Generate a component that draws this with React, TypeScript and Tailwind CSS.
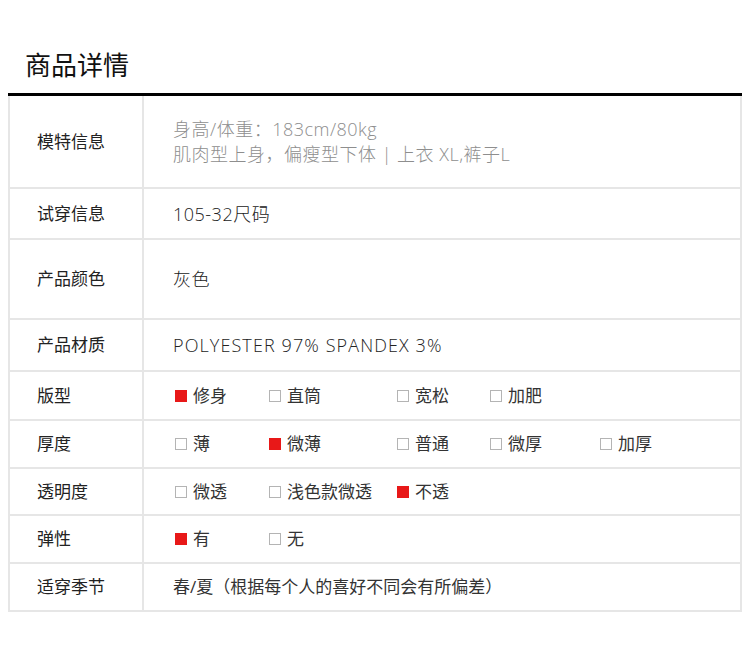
import React from "react";

const font = { fontFamily: '"Open Sans", "Noto Sans CJK SC", sans-serif' };

type Opt = { label: string; checked?: boolean };

const widths = ["w-[94px]", "w-[128px]", "w-[93px]", "w-[110px]", "w-[110px]"];

function Box({ checked }: { checked?: boolean }) {
  return checked ? (
    <span className="inline-block w-[12px] h-[12px] bg-[#e81818] shrink-0" />
  ) : (
    <span className="inline-block w-[12px] h-[12px] border border-[#b4b4b4] bg-white shrink-0" />
  );
}

function Options({ opts }: { opts: Opt[] }) {
  return (
    <div className="flex items-center pl-[31px]">
      {opts.map((o, i) => (
        <div key={o.label} className={`${widths[i]} flex items-center gap-[6px] shrink-0`}>
          <Box checked={o.checked} />
          <span className="text-[17px] text-[#333] leading-[20px]">{o.label}</span>
        </div>
      ))}
    </div>
  );
}

function Row({ label, h, children }: { label: string; h: string; children: React.ReactNode }) {
  return (
    <div className={`flex ${h} border-x-2 border-b-2 border-[#e6e6e6]`}>
      <div className="w-[134px] shrink-0 border-r-2 border-[#e6e6e6] flex items-center pl-[27px] text-[17px] text-[#222]">
        {label}
      </div>
      <div className="flex-1 flex items-center">{children}</div>
    </div>
  );
}

function Val({ children, wide }: { children: React.ReactNode; wide?: boolean }) {
  return (
    <div
      className={`pl-[29px] text-[18px] text-[#222] leading-[24px] font-light ${
        wide ? "tracking-[1.1px]" : "tracking-[0.5px]"
      }`}
    >
      {children}
    </div>
  );
}

export default function App() {
  return (
    <div className="w-[750px] h-[655px] bg-white pt-[50px]" style={font}>
      <div className="ml-[8px] w-[734px]">
        <h1 className="pl-[17px] text-[26px] leading-[30px] text-[#111] mb-[13px] font-normal">商品详情</h1>
        <div className="h-[3px] bg-black" />
        <Row label="模特信息" h="h-[93px]">
          <div className="pl-[29px] text-[18px] text-[#8e8e8e] leading-[25px] font-light tracking-[0.5px]">
            <div>身高/体重：183cm/80kg</div>
            <div>肌肉型上身，偏瘦型下体 | 上衣 XL,裤子L</div>
          </div>
        </Row>
        <Row label="试穿信息" h="h-[51px]">
          <Val>105-32尺码</Val>
        </Row>
        <Row label="产品颜色" h="h-[80px]">
          <Val>灰色</Val>
        </Row>
        <Row label="产品材质" h="h-[52px]">
          <Val wide>POLYESTER 97% SPANDEX 3%</Val>
        </Row>
        <Row label="版型" h="h-[49px]">
          <Options
            opts={[
              { label: "修身", checked: true },
              { label: "直筒" },
              { label: "宽松" },
              { label: "加肥" },
            ]}
          />
        </Row>
        <Row label="厚度" h="h-[48px]">
          <Options
            opts={[
              { label: "薄" },
              { label: "微薄", checked: true },
              { label: "普通" },
              { label: "微厚" },
              { label: "加厚" },
            ]}
          />
        </Row>
        <Row label="透明度" h="h-[47px]">
          <Options
            opts={[
              { label: "微透" },
              { label: "浅色款微透" },
              { label: "不透", checked: true },
            ]}
          />
        </Row>
        <Row label="弹性" h="h-[48px]">
          <Options opts={[{ label: "有", checked: true }, { label: "无" }]} />
        </Row>
        <Row label="适穿季节" h="h-[48px]">
          <div className="pl-[29px] text-[17px] text-[#333] leading-[24px]">
            春/夏（根据每个人的喜好不同会有所偏差）
          </div>
        </Row>
      </div>
    </div>
  );
}
